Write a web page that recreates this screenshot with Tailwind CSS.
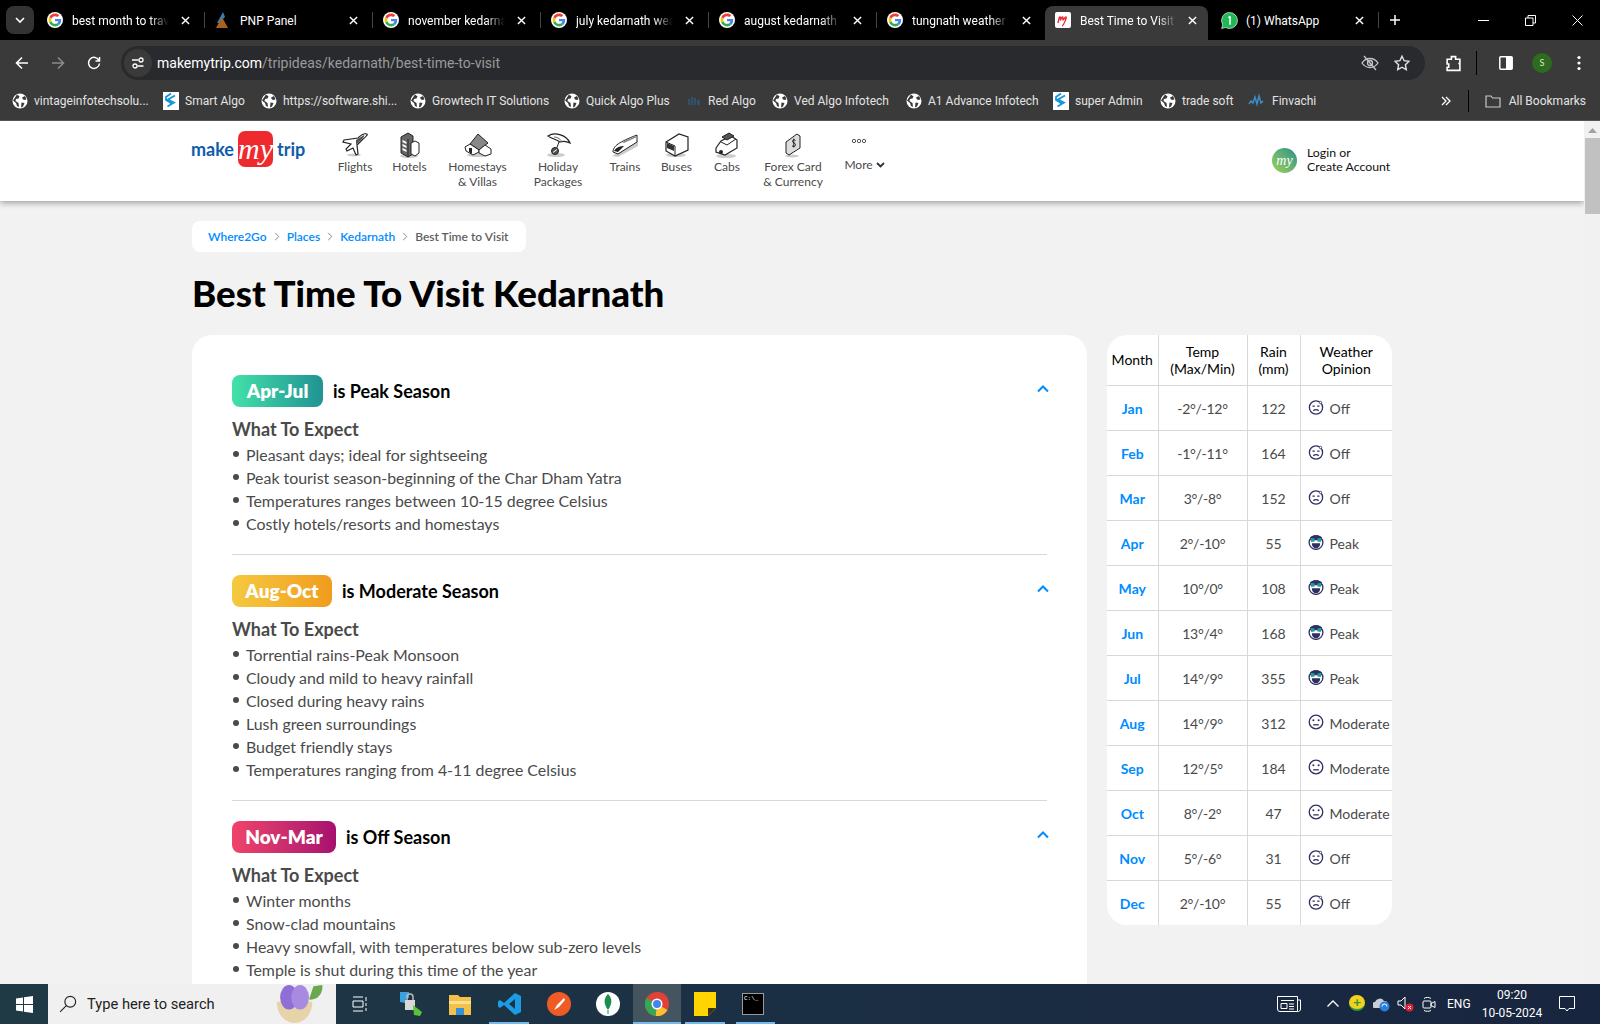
<!doctype html>
<html lang="en">
<head>
<meta charset="utf-8">
<title>Best Time To Visit Kedarnath</title>
<script src="https://cdn.jsdelivr.net/npm/@tailwindcss/browser@4"></script>
</head>
<body class="m-0 overflow-hidden">
<!-- shared icons -->
<svg class="hidden">
  <symbol id="google" viewBox="-6 -6 60 60">
    <circle cx="24" cy="24" r="30" fill="#fff"/>
    <path fill="#EA4335" d="M24 9.5c3.54 0 6.71 1.22 9.21 3.6l6.85-6.85C35.9 2.38 30.47 0 24 0 14.62 0 6.51 5.38 2.56 13.22l7.98 6.19C12.43 13.72 17.74 9.5 24 9.5z"/>
    <path fill="#4285F4" d="M46.98 24.55c0-1.57-.15-3.09-.38-4.55H24v9.02h12.94c-.58 2.96-2.26 5.48-4.78 7.18l7.73 6c4.51-4.18 7.09-10.36 7.09-17.65z"/>
    <path fill="#FBBC05" d="M10.53 28.59c-.48-1.45-.76-2.99-.76-4.59s.27-3.14.76-4.59l-7.98-6.19C.92 16.46 0 20.12 0 24c0 3.88.92 7.54 2.56 10.78l7.97-6.19z"/>
    <path fill="#34A853" d="M24 48c6.48 0 11.93-2.13 15.89-5.81l-7.73-6c-2.15 1.45-4.92 2.3-8.16 2.3-6.26 0-11.57-4.22-13.47-9.91l-7.98 6.19C6.51 42.62 14.62 48 24 48z"/>
  </symbol>
  <symbol id="x" viewBox="0 0 10 10"><path d="M1 1l8 8M9 1l-8 8" stroke="#fff" stroke-width="1.6" fill="none"/></symbol>
  <symbol id="globe" viewBox="0 0 16 16">
    <circle cx="8" cy="8" r="7.5" fill="#fff"/>
    <path d="M5 1.5l2.5 2-1 2-2.5 .5-.5 2 3 2 .5 4-2-1-1-3-3-2.500zM10 4.500l3-1.500 1.500 3-1.500 1-2-.5zM9.500 9.500l3 .5-1.500 3.500-2 1z" fill="#3a3a3a"/>
  </symbol>
  <symbol id="salgo" viewBox="0 0 16 18">
    <rect width="16" height="18" fill="#fff"/>
    <path d="M12 3.500L5 7.500l6 3-6.500 4M8 1.500L3 5v3l5 3-1 1" fill="none" stroke="#1796d8" stroke-width="1.800"/>
  </symbol>
  <symbol id="off" viewBox="0 0 16 16">
    <g fill="none" stroke="#2f2f63" stroke-width="1.300">
      <circle cx="8" cy="8.500" r="6.600"/>
      <path d="M4.500 7.200h2.300M9.200 7.200h2.300M5.300 11.800c1.500-1.700 3.900-1.700 5.400 0"/>
    </g>
    <circle cx="12.500" cy="3.500" r="1.200" fill="#fff" stroke="#2f2f63" stroke-width=".8"/>
  </symbol>
  <symbol id="peak" viewBox="0 0 16 16">
    <circle cx="8" cy="8.500" r="6.900" fill="#fff" stroke="#2f2f63" stroke-width="1.300"/>
    <path d="M2 3.200c3-2.400 9-2.400 12 0v3H2z" fill="#2f2f63"/>
    <path d="M2.500 3.800l4.200 .7v3L3.200 8zM13.500 3.800l-4.200 .7v3l3.500 .5z" fill="#1f9d9d"/>
    <path d="M3.800 9.300h8.400c0 3.200-2 5-4.200 5s-4.200-1.800-4.200-5z" fill="#2f2f63"/>
  </symbol>
  <symbol id="mod" viewBox="0 0 16 16">
    <g fill="none" stroke="#2f2f63" stroke-width="1.300">
      <circle cx="8" cy="8" r="6.800"/>
      <path d="M5.200 10.800h5.600"/>
    </g>
    <circle cx="5.400" cy="6.200" r="1" fill="#2f2f63"/><circle cx="10.600" cy="6.200" r="1" fill="#2f2f63"/>
  </symbol>
  <symbol id="chev" viewBox="0 0 12 8"><path d="M1 6.500l5-5 5 5" fill="none" stroke="#008cff" stroke-width="2"/></symbol>
  <symbol id="crumb" viewBox="0 0 6 10"><path d="M1 1l4 4-4 4" fill="none" stroke="#777" stroke-width="1"/></symbol>
</svg>

<div class="w-[1600px] h-[1024px] flex flex-col overflow-hidden font-['Lato',sans-serif] bg-[#f2f2f2]">

  <!-- tab strip -->
  <div class="h-10 shrink-0 bg-black flex text-white font-['Roboto',sans-serif] text-[12px] relative">
    <div class="w-[37px] flex pl-1.5 pt-1.5">
      <div class="w-7 h-7 rounded-lg bg-[#333] flex items-center justify-center">
        <svg width="10" height="7" viewBox="0 0 10 7"><path d="M1 1l4 4 4-4" fill="none" stroke="#fff" stroke-width="1.600"/></svg>
      </div>
    </div>
    <div class="w-[168px] flex items-center pl-[10px] pr-[14px] border-r border-[#444] my-3"><svg class="w-4 h-4 shrink-0"><use href="#google"/></svg><span class="ml-[9px] pt-[2px] w-[97px] overflow-hidden whitespace-nowrap [mask-image:linear-gradient(to_right,black_80%,transparent)]">best month to travel</span><svg class="ml-auto w-[9px] h-[9px]"><use href="#x"/></svg></div>
    <div class="w-[168px] flex items-center pl-[10px] pr-[14px] border-r border-[#444] my-3"><svg class="w-4 h-4 shrink-0" viewBox="0 0 16 16"><path d="M8 0l2 5-3 3 3 3H2z" fill="#2f7fc1"/><path d="M7 5l6 11H1z" fill="#a8611f"/></svg><span class="ml-[9px] pt-[2px] w-[97px] overflow-hidden whitespace-nowrap">PNP Panel</span><svg class="ml-auto w-[9px] h-[9px]"><use href="#x"/></svg></div>
    <div class="w-[168px] flex items-center pl-[10px] pr-[14px] border-r border-[#444] my-3"><svg class="w-4 h-4 shrink-0"><use href="#google"/></svg><span class="ml-[9px] pt-[2px] w-[97px] overflow-hidden whitespace-nowrap [mask-image:linear-gradient(to_right,black_80%,transparent)]">november kedarnath</span><svg class="ml-auto w-[9px] h-[9px]"><use href="#x"/></svg></div>
    <div class="w-[168px] flex items-center pl-[10px] pr-[14px] border-r border-[#444] my-3"><svg class="w-4 h-4 shrink-0"><use href="#google"/></svg><span class="ml-[9px] pt-[2px] w-[97px] overflow-hidden whitespace-nowrap [mask-image:linear-gradient(to_right,black_80%,transparent)]">july kedarnath weather</span><svg class="ml-auto w-[9px] h-[9px]"><use href="#x"/></svg></div>
    <div class="w-[168px] flex items-center pl-[10px] pr-[14px] border-r border-[#444] my-3"><svg class="w-4 h-4 shrink-0"><use href="#google"/></svg><span class="ml-[9px] pt-[2px] w-[97px] overflow-hidden whitespace-nowrap [mask-image:linear-gradient(to_right,black_80%,transparent)]">august kedarnath weather</span><svg class="ml-auto w-[9px] h-[9px]"><use href="#x"/></svg></div>
    <div class="w-[168px] flex items-center pl-[10px] pr-[14px] my-3"><svg class="w-4 h-4 shrink-0"><use href="#google"/></svg><span class="ml-[9px] pt-[2px] w-[97px] overflow-hidden whitespace-nowrap [mask-image:linear-gradient(to_right,black_80%,transparent)]">tungnath weather</span><svg class="ml-auto w-[9px] h-[9px]"><use href="#x"/></svg></div>
    <div class="w-[163px] mt-1.5 pb-[6px] rounded-t-lg bg-[#3a3a3a] flex items-center pl-[10px] pr-[11px] -mr-[2px]"><svg class="w-4 h-4 shrink-0" viewBox="0 0 16 16"><rect width="16" height="16" rx="2" fill="#fff"/><path d="M3 11c1-5 1-6 2-6s0 3 .5 3 1-3 2-3 0 3 .5 3 2-3 3-3-2 8-4 9" fill="none" stroke="#e8242e" stroke-width="1.300"/></svg><span class="ml-[9px] pt-[2px] w-[97px] overflow-hidden whitespace-nowrap [mask-image:linear-gradient(to_right,black_80%,transparent)]">Best Time to Visit Kedarnath</span><svg class="ml-auto w-[9px] h-[9px]"><use href="#x"/></svg></div>
    <div class="w-[168px] flex items-center pl-[10px] pr-[14px] border-r border-[#444] my-3 ml-[5px]"><svg class="w-[17px] h-[17px] shrink-0" viewBox="0 0 16 16"><path d="M8 .5a7.500 7.500 0 0 1 0 15c-1.300 0-2.500-.3-3.600-.9L.6 15.500l1-3.600A7.500 7.500 0 0 1 8 .5z" fill="#1fb855" stroke="#fff" stroke-width=".6"/><path d="M8.500 4v8M7 5.500L8.500 4" stroke="#fff" stroke-width="1.400" fill="none"/></svg><span class="ml-[8px] pt-[2px] w-[97px] overflow-hidden whitespace-nowrap">(1) WhatsApp</span><svg class="ml-auto w-[9px] h-[9px]"><use href="#x"/></svg></div>
    <svg class="ml-[10px] mt-[14px] w-[12px] h-[12px]" viewBox="0 0 12 12"><path d="M6 1v10M1 6h10" stroke="#fff" stroke-width="1.500"/></svg>
    <div class="ml-auto flex items-center gap-[36px] pr-[17px]">
      <svg class="w-[11px] h-[11px]" viewBox="0 0 11 11"><path d="M0 5.500h11" stroke="#fff"/></svg>
      <svg class="w-[11px] h-[11px]" viewBox="0 0 11 11"><path d="M.5 3h7.500v7.500H.5zM3 3V.5h7.500V8H8" fill="none" stroke="#fff"/></svg>
      <svg class="w-[11px] h-[11px]" viewBox="0 0 11 11"><path d="M.5.500l10 10M10.500.500l-10 10" stroke="#fff"/></svg>
    </div>
  </div>

  <!-- address bar -->
  <div class="h-10 shrink-0 bg-[#3a3a3a] flex items-center pt-[6px] relative">
    <svg class="ml-[15px] w-[14px] h-[14px]" viewBox="0 0 14 14"><path d="M13 7H2M7 1.500L1.500 7 7 12.500" fill="none" stroke="#fff" stroke-width="1.600"/></svg>
    <svg class="ml-[22px] w-[14px] h-[14px]" viewBox="0 0 14 14"><path d="M1 7h11M7 1.500L12.500 7 7 12.500" fill="none" stroke="#8a8a8a" stroke-width="1.600"/></svg>
    <svg class="ml-[22px] w-[14px] h-[14px]" viewBox="0 0 14 14"><path d="M12 4.500A5.500 5.500 0 1 0 12.500 7.500M12.500 1v4h-4" fill="none" stroke="#fff" stroke-width="1.500"/></svg>
    <div class="ml-[20px] w-[1304px] h-[34px] rounded-full bg-[#282a2d] flex items-center">
      <div class="ml-[3px] w-7 h-7 rounded-full bg-[#3a3a3a] flex items-center justify-center">
        <svg class="w-[14px] h-[14px]" viewBox="0 0 14 14"><g fill="none" stroke="#fff" stroke-width="1.300"><path d="M1 4h6.500M12.500 10H6.500"/><circle cx="10" cy="4" r="2"/><circle cx="4" cy="10" r="2"/></g></svg>
      </div>
      <span class="ml-[5px] font-['Roboto',sans-serif] text-[14px] text-white">makemytrip.com<span class="text-[#9a9a9a]">/tripideas/kedarnath/best-time-to-visit</span></span>
      <svg class="ml-auto w-[18px] h-[16px]" viewBox="0 0 18 16"><g fill="none" stroke="#c7c7c7" stroke-width="1.300"><path d="M1 8c4-6 12-6 16 0-4 6-12 6-16 0z"/><circle cx="9" cy="8" r="2.500"/><path d="M3 1l12 14"/></g></svg>
      <svg class="ml-[15px] mr-[15px] w-[16px] h-[16px]" viewBox="0 0 16 16"><path d="M8 1.200l2.100 4.500 4.900.6-3.600 3.400.9 4.900L8 12.200l-4.300 2.400.9-4.900L1 6.300l4.900-.6z" fill="none" stroke="#e3e3e3" stroke-width="1.400"/></svg>
    </div>
    <svg class="ml-[20px] w-[17px] h-[17px]" viewBox="0 0 16 16"><path d="M2 4h4V1.500h4V4h4v4h-1.500v0H14v6.500H2v-3h1.500v-3H2z" fill="none" stroke="#fff" stroke-width="1.500"/></svg>
    <div class="ml-[14px] w-px h-6 bg-black"></div>
    <svg class="ml-[22px] w-[14px] h-[14px]" viewBox="0 0 14 14"><rect x=".8" y=".8" width="12.400" height="12.400" rx="1" fill="none" stroke="#fff" stroke-width="1.500"/><rect x="7" y="1" width="6" height="12" fill="#fff"/></svg>
    <div class="ml-[19px] w-5 h-5 rounded-full bg-[#2e6b1f] text-[#d8e8d0] text-[9px] flex items-center justify-center">S</div>
    <svg class="ml-[25px] w-1 h-4" viewBox="0 0 4 16"><circle cx="2" cy="2.500" r="1.600" fill="#fff"/><circle cx="2" cy="8" r="1.600" fill="#fff"/><circle cx="2" cy="13.500" r="1.600" fill="#fff"/></svg>
  </div>

  <!-- bookmarks -->
  <div class="h-10 shrink-0 bg-[#3a3a3a] flex items-center pl-3 pt-[1px] text-[#e3e3e3] font-['Roboto',sans-serif] text-[12px] whitespace-nowrap">
    <div class="w-[151px] flex items-center gap-1.5"><svg class="w-4 h-4"><use href="#globe"/></svg>vintageinfotechsolu...</div>
    <div class="w-[98px] flex items-center gap-1.5"><svg class="w-4 h-[18px]"><use href="#salgo"/></svg>Smart Algo</div>
    <div class="w-[149px] flex items-center gap-1.5"><svg class="w-4 h-4"><use href="#globe"/></svg>https://software.shi...</div>
    <div class="w-[154px] flex items-center gap-1.5"><svg class="w-4 h-4"><use href="#globe"/></svg>Growtech IT Solutions</div>
    <div class="w-[122px] flex items-center gap-1.5"><svg class="w-4 h-4"><use href="#globe"/></svg>Quick Algo Plus</div>
    <div class="w-[86px] flex items-center gap-1.5"><svg class="w-4 h-4" viewBox="0 0 16 16"><path d="M2 6h2v6H2zM5 4h2v8H5zM8 5h2v7H8zM11 7h3v5h-3z" fill="#34506a"/></svg>Red Algo</div>
    <div class="w-[134px] flex items-center gap-1.5"><svg class="w-4 h-4"><use href="#globe"/></svg>Ved Algo Infotech</div>
    <div class="w-[147px] flex items-center gap-1.5"><svg class="w-4 h-4"><use href="#globe"/></svg>A1 Advance Infotech</div>
    <div class="w-[107px] flex items-center gap-1.5"><svg class="w-4 h-[18px]"><use href="#salgo"/></svg>super Admin</div>
    <div class="w-[88px] flex items-center gap-1.5"><svg class="w-4 h-4"><use href="#globe"/></svg>trade soft</div>
    <div class="flex items-center gap-2"><svg class="w-4 h-4" viewBox="0 0 16 16"><path d="M1 11l2-3 2 2 2-6 2 7 2-8 2 7 2-2" fill="none" stroke="#3d8bc7" stroke-width="1.500"/></svg>Finvachi</div>
    <svg class="ml-auto w-[10px] h-[10px]" viewBox="0 0 10 10"><path d="M1 1l4 4-4 4M5 1l4 4-4 4" fill="none" stroke="#fff" stroke-width="1.300"/></svg>
    <div class="ml-[17px] w-px h-[22px] bg-black"></div>
    <svg class="ml-[16px] w-4 h-4" viewBox="0 0 16 16"><path d="M1 3h5l1.500 2H15v9H1z" fill="none" stroke="#c7c7c7" stroke-width="1.200"/></svg>
    <span class="ml-[8px] mr-[14px]">All Bookmarks</span>
  </div>

  <!-- browser viewport -->
  <div class="flex-1 flex min-h-0 border-t border-[#555]">
    <div class="flex-1 min-w-0 overflow-hidden">
      <!-- site header -->
      <header class="h-20 bg-white shadow-[0_2px_6px_rgba(0,0,0,0.35)] flex relative pl-[191px] text-[12px] leading-[15px] text-[#4a4a4a]">
        <div class="w-[137px] flex items-start pt-[10px]">
          <span class="font-bold text-[18px] leading-[36px] text-[#0f5cab]">make</span>
          <div class="mx-1 w-[35px] h-[36px] shrink-0 rounded-[7px] bg-[#ee2a2f] flex items-center justify-center font-['Liberation_Serif',serif] italic text-white text-[30px] leading-none">my</div>
          <span class="font-bold text-[18px] leading-[36px] text-[#0f5cab]">trip</span>
        </div>
        <nav class="flex text-center">
          <div class="w-[54px] flex flex-col items-center pt-[10px]">
            <svg class="w-[28px] h-[28px]" viewBox="0 0 28 28"><ellipse cx="13" cy="24" rx="7" ry="1.500" fill="#ccc"/><path d="M26 3c-3-1-6 1-9 4L3 9l-1 2 8 2-5 5 1 2 6-3 3 7 2-1-1-9 6-6c3-2 5-5 4-5z" fill="#fff" stroke="#222" stroke-width="1.200"/><path d="M15 9l8-5c1 1-1 3-3 5l-5 5z" fill="#555"/></svg>
            <span>Flights</span>
          </div>
          <div class="w-[55px] flex flex-col items-center pt-[10px]">
            <svg class="w-[28px] h-[28px]" viewBox="0 0 28 28"><ellipse cx="13" cy="25" rx="9" ry="2" fill="#ccc"/><path d="M5 6l7-4 5 3v18l-5 3-7-4z" fill="#666" stroke="#222"/><path d="M12 8v18" stroke="#222"/><path d="M6.500 9l4 2v2l-4-2zM6.500 13l4 2v2l-4-2zM6.500 17l4 2v2l-4-2z" fill="#fff"/><path d="M15 12l4-2 4 2v10l-4 3-4-2z" fill="#fff" stroke="#222"/></svg>
            <span>Hotels</span>
          </div>
          <div class="w-[81px] flex flex-col items-center pt-[10px]">
            <svg class="w-[30px] h-[28px]" viewBox="0 0 30 28"><ellipse cx="15" cy="24" rx="11" ry="2" fill="#ccc"/><path d="M7 13L15 3l10 9-9 7z" fill="#888" stroke="#222"/><path d="M7 13l-5 3 1 4 7 4 6-3v-2z" fill="#fff" stroke="#222"/><path d="M16 19l6-5 6 4v5l-6 2-6-3z" fill="#fff" stroke="#222"/><path d="M6 17h3v6l-3-2z" fill="#222"/></svg>
            <span>Homestays<br>&amp; Villas</span>
          </div>
          <div class="w-[80px] flex flex-col items-center pt-[10px]">
            <svg class="w-[28px] h-[28px]" viewBox="0 0 28 28"><ellipse cx="12" cy="24" rx="9" ry="2" fill="#ccc"/><path d="M4 5c6-4 18-2 22 7-4-2-7-2-10-1-4-3-8-3-12-6z" fill="#fff" stroke="#222" stroke-width="1.200"/><path d="M10 6c2 0 6 1 8 5" stroke="#666" fill="none"/><path d="M15 11l-3 8" stroke="#222"/><circle cx="11" cy="20" r="3.500" fill="#555" stroke="#222"/><path d="M9 21.500l4-3" stroke="#fff"/></svg>
            <span>Holiday<br>Packages</span>
          </div>
          <div class="w-[54px] flex flex-col items-center pt-[10px]">
            <svg class="w-[30px] h-[28px]" viewBox="0 0 30 28"><path d="M2 25l6 1 20-11V9z" fill="#ccc"/><path d="M3 21c0-6 6-10 24-17v7L8 23z" fill="#fff" stroke="#222"/><path d="M4 20c2-4 7-5 10-5l-6 6z" fill="#222"/><path d="M12 11l14-6v1.500L14 12z" fill="#888"/></svg>
            <span>Trains</span>
          </div>
          <div class="w-[49px] flex flex-col items-center pt-[10px]">
            <svg class="w-[28px] h-[28px]" viewBox="0 0 28 28"><ellipse cx="13" cy="24" rx="10" ry="2" fill="#ccc"/><path d="M3 11L16 3l9 3v13L12 25 3 20z" fill="#fff" stroke="#222" stroke-width="1.200"/><path d="M3 11l9 4v10" fill="none" stroke="#222"/><path d="M4 12l7 3v5l-7-3z" fill="#333"/></svg>
            <span>Buses</span>
          </div>
          <div class="w-[52px] flex flex-col items-center pt-[10px]">
            <svg class="w-[28px] h-[28px]" viewBox="0 0 28 28"><ellipse cx="13" cy="25" rx="10" ry="2" fill="#ccc"/><path d="M3 17l5-7 10-5 6 4v8l-12 7-9-3z" fill="#fff" stroke="#222" stroke-width="1.200"/><path d="M9 6l7-4 5 3-7 4z" fill="#555" stroke="#222"/><path d="M8 11l6 3 9-6" fill="none" stroke="#222"/><circle cx="8" cy="21" r="2" fill="#222"/></svg>
            <span>Cabs</span>
          </div>
          <div class="w-[80px] flex flex-col items-center pt-[10px]">
            <svg class="w-[24px] h-[28px]" viewBox="0 0 24 28"><ellipse cx="11" cy="25" rx="7" ry="1.500" fill="#ccc"/><path d="M5 11l11-8 3 2v12l-11 7-3-2z" fill="#ddd" stroke="#222"/><path d="M14.500 9.500c-1-1.500-3.500-.5-3 1.200s3 1 3 3-2.500 2.500-3.500 1M12.800 7.500v9" fill="none" stroke="#222"/></svg>
            <span>Forex Card<br>&amp; Currency</span>
          </div>
          <div class="w-[52px] flex flex-col items-center pt-[10px]">
            <svg class="w-[28px] h-[28px]" viewBox="0 0 28 28"><g fill="none" stroke="#555"><circle cx="9" cy="10" r="1.700"/><circle cx="14" cy="10" r="1.700"/><circle cx="19" cy="10" r="1.700"/></g></svg>
            <span class="-mt-[2px] ml-[11px] flex items-center gap-[3px]">More<svg class="w-[9px] h-[6px]" viewBox="0 0 9 6"><path d="M1 1l3.500 3.500L8 1" fill="none" stroke="#333" stroke-width="1.800"/></svg></span>
          </div>
        </nav>
        <div class="ml-[387px] flex items-center gap-[10px] h-[78px] text-[#111] text-[12.300px]">
          <div class="w-[25px] h-[25px] rounded-full bg-gradient-to-tr from-[#9ed44c] to-[#249086] flex items-center justify-center font-['Liberation_Serif',serif] italic text-white text-[14px]">my</div>
          <div class="leading-[14px]">Login or<br>Create Account</div>
        </div>
      </header>

      <main class="pl-[192px] w-[1392px]">
        <!-- breadcrumb -->
        <div class="mt-5 w-[334px] h-[31px] rounded-lg bg-white flex items-center pl-4 text-[12px] font-semibold text-[#008cff] whitespace-nowrap">
          <span>Where2Go</span>
          <svg class="mx-[7px] w-[6px] h-[9px]"><use href="#crumb"/></svg>
          <span>Places</span>
          <svg class="mx-[7px] w-[6px] h-[9px]"><use href="#crumb"/></svg>
          <span>Kedarnath</span>
          <svg class="mx-[7px] w-[6px] h-[9px]"><use href="#crumb"/></svg>
          <span class="text-[#5f5f5f]">Best Time to Visit</span>
        </div>
        <h1 class="mt-[17px] h-[48px] text-[36.700px] leading-[48px] font-black text-black">Best Time To Visit Kedarnath</h1>

        <div class="mt-[18px] flex gap-5 items-start">
          <!-- seasons -->
          <div class="w-[895px] rounded-[20px] bg-white px-10 pt-10 pb-10 shrink-0 text-[#4a4a4a]">
            <section class="pb-[19px] border-b border-[#d8d8d8] mb-5">
              <div class="h-8 flex items-center">
                <span class="w-[91px] h-8 rounded-lg bg-gradient-to-r from-[#43e1a8] to-[#219393] text-white font-extrabold text-[19px] leading-8 text-center">Apr-Jul</span>
                <span class="ml-[10px] text-[18px] font-bold text-black">is Peak Season</span>
                <svg class="ml-auto mr-[-2px] w-3 h-2 -mt-[4px]"><use href="#chev"/></svg>
              </div>
              <h3 class="mt-[9px] h-[26px] text-[18px] leading-[26px] font-bold">What To Expect</h3>
              <ul class="mt-[1px] text-[15.900px] leading-[23px] pl-[14px] [&>li]:relative [&>li]:before:absolute [&>li]:before:content-[''] [&>li]:before:left-[-13px] [&>li]:before:top-[8px] [&>li]:before:w-[6px] [&>li]:before:h-[6px] [&>li]:before:rounded-full [&>li]:before:bg-[#4a4a4a]">
                <li>Pleasant days; ideal for sightseeing</li>
                <li>Peak tourist season-beginning of the Char Dham Yatra</li>
                <li>Temperatures ranges between 10-15 degree Celsius</li>
                <li>Costly hotels/resorts and homestays</li>
              </ul>
            </section>
            <section class="pb-[19px] border-b border-[#d8d8d8] mb-5">
              <div class="h-8 flex items-center">
                <span class="w-[100px] h-8 rounded-lg bg-gradient-to-r from-[#f5c93f] to-[#f09c1d] text-white font-extrabold text-[19px] leading-8 text-center">Aug-Oct</span>
                <span class="ml-[10px] text-[18px] font-bold text-black">is Moderate Season</span>
                <svg class="ml-auto mr-[-2px] w-3 h-2 -mt-[4px]"><use href="#chev"/></svg>
              </div>
              <h3 class="mt-[9px] h-[26px] text-[18px] leading-[26px] font-bold">What To Expect</h3>
              <ul class="mt-[1px] text-[15.900px] leading-[23px] pl-[14px] [&>li]:relative [&>li]:before:absolute [&>li]:before:content-[''] [&>li]:before:left-[-13px] [&>li]:before:top-[8px] [&>li]:before:w-[6px] [&>li]:before:h-[6px] [&>li]:before:rounded-full [&>li]:before:bg-[#4a4a4a]">
                <li>Torrential rains-Peak Monsoon</li>
                <li>Cloudy and mild to heavy rainfall</li>
                <li>Closed during heavy rains</li>
                <li>Lush green surroundings</li>
                <li>Budget friendly stays</li>
                <li>Temperatures ranging from 4-11 degree Celsius</li>
              </ul>
            </section>
            <section>
              <div class="h-8 flex items-center">
                <span class="w-[104px] h-8 rounded-lg bg-gradient-to-r from-[#f0436a] to-[#a70f6e] text-white font-extrabold text-[19px] leading-8 text-center">Nov-Mar</span>
                <span class="ml-[10px] text-[18px] font-bold text-black">is Off Season</span>
                <svg class="ml-auto mr-[-2px] w-3 h-2 -mt-[4px]"><use href="#chev"/></svg>
              </div>
              <h3 class="mt-[9px] h-[26px] text-[18px] leading-[26px] font-bold">What To Expect</h3>
              <ul class="mt-[1px] text-[15.900px] leading-[23px] pl-[14px] [&>li]:relative [&>li]:before:absolute [&>li]:before:content-[''] [&>li]:before:left-[-13px] [&>li]:before:top-[8px] [&>li]:before:w-[6px] [&>li]:before:h-[6px] [&>li]:before:rounded-full [&>li]:before:bg-[#4a4a4a]">
                <li>Winter months</li>
                <li>Snow-clad mountains</li>
                <li>Heavy snowfall, with temperatures below sub-zero levels</li>
                <li>Temple is shut during this time of the year</li>
              </ul>
            </section>
          </div>

          <!-- monthly table -->
          <div class="w-[285px] rounded-[20px] bg-white overflow-hidden shrink-0">
            <table class="w-[285px] table-fixed border-collapse text-[14px] text-center text-[#4a4a4a]">
              <colgroup><col class="w-[51px]"><col class="w-[89px]"><col class="w-[53px]"><col class="w-[92px]"></colgroup>
              <thead class="text-black font-normal leading-[17px]">
                <tr class="h-[50px] border-b border-[#d8d8d8]">
                  <th class="font-normal border-r border-[#d8d8d8]">Month</th>
                  <th class="font-normal border-r border-[#d8d8d8]">Temp<br>(Max/Min)</th>
                  <th class="font-normal border-r border-[#d8d8d8]">Rain<br>(mm)</th>
                  <th class="font-normal">Weather<br>Opinion</th>
                </tr>
              </thead>
              <tbody class="[&>tr>td]:pt-[2px] [&>tr>td:nth-child(2)]:tracking-[-0.3px]">
                <tr class="h-[45px] border-b border-[#d8d8d8]"><td class="font-bold text-[#008cff] border-r border-[#d8d8d8]">Jan</td><td class="border-r border-[#d8d8d8]">-2°/-12°</td><td class="border-r border-[#d8d8d8]">122</td><td class="text-left pl-[7px]"><div class="flex items-center gap-[6px]"><svg class="w-4 h-4 -mt-[3px]"><use href="#off"/></svg>Off</div></td></tr>
                <tr class="h-[45px] border-b border-[#d8d8d8]"><td class="font-bold text-[#008cff] border-r border-[#d8d8d8]">Feb</td><td class="border-r border-[#d8d8d8]">-1°/-11°</td><td class="border-r border-[#d8d8d8]">164</td><td class="text-left pl-[7px]"><div class="flex items-center gap-[6px]"><svg class="w-4 h-4 -mt-[3px]"><use href="#off"/></svg>Off</div></td></tr>
                <tr class="h-[45px] border-b border-[#d8d8d8]"><td class="font-bold text-[#008cff] border-r border-[#d8d8d8]">Mar</td><td class="border-r border-[#d8d8d8]">3°/-8°</td><td class="border-r border-[#d8d8d8]">152</td><td class="text-left pl-[7px]"><div class="flex items-center gap-[6px]"><svg class="w-4 h-4 -mt-[3px]"><use href="#off"/></svg>Off</div></td></tr>
                <tr class="h-[45px] border-b border-[#d8d8d8]"><td class="font-bold text-[#008cff] border-r border-[#d8d8d8]">Apr</td><td class="border-r border-[#d8d8d8]">2°/-10°</td><td class="border-r border-[#d8d8d8]">55</td><td class="text-left pl-[7px]"><div class="flex items-center gap-[6px]"><svg class="w-4 h-4 -mt-[3px]"><use href="#peak"/></svg>Peak</div></td></tr>
                <tr class="h-[45px] border-b border-[#d8d8d8]"><td class="font-bold text-[#008cff] border-r border-[#d8d8d8]">May</td><td class="border-r border-[#d8d8d8]">10°/0°</td><td class="border-r border-[#d8d8d8]">108</td><td class="text-left pl-[7px]"><div class="flex items-center gap-[6px]"><svg class="w-4 h-4 -mt-[3px]"><use href="#peak"/></svg>Peak</div></td></tr>
                <tr class="h-[45px] border-b border-[#d8d8d8]"><td class="font-bold text-[#008cff] border-r border-[#d8d8d8]">Jun</td><td class="border-r border-[#d8d8d8]">13°/4°</td><td class="border-r border-[#d8d8d8]">168</td><td class="text-left pl-[7px]"><div class="flex items-center gap-[6px]"><svg class="w-4 h-4 -mt-[3px]"><use href="#peak"/></svg>Peak</div></td></tr>
                <tr class="h-[45px] border-b border-[#d8d8d8]"><td class="font-bold text-[#008cff] border-r border-[#d8d8d8]">Jul</td><td class="border-r border-[#d8d8d8]">14°/9°</td><td class="border-r border-[#d8d8d8]">355</td><td class="text-left pl-[7px]"><div class="flex items-center gap-[6px]"><svg class="w-4 h-4 -mt-[3px]"><use href="#peak"/></svg>Peak</div></td></tr>
                <tr class="h-[45px] border-b border-[#d8d8d8]"><td class="font-bold text-[#008cff] border-r border-[#d8d8d8]">Aug</td><td class="border-r border-[#d8d8d8]">14°/9°</td><td class="border-r border-[#d8d8d8]">312</td><td class="text-left pl-[7px]"><div class="flex items-center gap-[6px]"><svg class="w-4 h-4 -mt-[3px]"><use href="#mod"/></svg>Moderate</div></td></tr>
                <tr class="h-[45px] border-b border-[#d8d8d8]"><td class="font-bold text-[#008cff] border-r border-[#d8d8d8]">Sep</td><td class="border-r border-[#d8d8d8]">12°/5°</td><td class="border-r border-[#d8d8d8]">184</td><td class="text-left pl-[7px]"><div class="flex items-center gap-[6px]"><svg class="w-4 h-4 -mt-[3px]"><use href="#mod"/></svg>Moderate</div></td></tr>
                <tr class="h-[45px] border-b border-[#d8d8d8]"><td class="font-bold text-[#008cff] border-r border-[#d8d8d8]">Oct</td><td class="border-r border-[#d8d8d8]">8°/-2°</td><td class="border-r border-[#d8d8d8]">47</td><td class="text-left pl-[7px]"><div class="flex items-center gap-[6px]"><svg class="w-4 h-4 -mt-[3px]"><use href="#mod"/></svg>Moderate</div></td></tr>
                <tr class="h-[45px] border-b border-[#d8d8d8]"><td class="font-bold text-[#008cff] border-r border-[#d8d8d8]">Nov</td><td class="border-r border-[#d8d8d8]">5°/-6°</td><td class="border-r border-[#d8d8d8]">31</td><td class="text-left pl-[7px]"><div class="flex items-center gap-[6px]"><svg class="w-4 h-4 -mt-[3px]"><use href="#off"/></svg>Off</div></td></tr>
                <tr class="h-[45px]"><td class="font-bold text-[#008cff] border-r border-[#d8d8d8]">Dec</td><td class="border-r border-[#d8d8d8]">2°/-10°</td><td class="border-r border-[#d8d8d8]">55</td><td class="text-left pl-[7px]"><div class="flex items-center gap-[6px]"><svg class="w-4 h-4 -mt-[3px]"><use href="#off"/></svg>Off</div></td></tr>
              </tbody>
            </table>
          </div>
        </div>
      </main>
    </div>
    <!-- scrollbar -->
    <div class="w-4 shrink-0 bg-[#f1f1f1] flex flex-col items-center pt-[7px] pl-px">
      <svg class="w-[9px] h-[5px]" viewBox="0 0 9 5"><path d="M4.500 0L9 5H0z" fill="#a3a3a3"/></svg>
      <div class="mt-[5px] w-[15px] h-[76px] bg-[#c1c1c1]"></div>
    </div>
  </div>

  <!-- taskbar -->
  <div class="h-10 shrink-0 bg-gradient-to-r from-[#1f3a45] via-[#1b2f44] to-[#18253f] flex items-center text-white relative z-10">
    <div class="w-[48px] flex justify-center">
      <svg class="w-[17px] h-[17px]" viewBox="0 0 17 17"><path d="M0 2.400L7 1.400V8H0zM8 1.200L17 0v8H8zM0 9h7v6.600L0 14.600zM8 9h9v8L8 15.800z" fill="#fff"/></svg>
    </div>
    <div class="w-[288px] h-10 bg-[#f0f0f0] flex items-center text-[#222] text-[14.700px] font-['Roboto',sans-serif]">
      <svg class="ml-[11px] w-[18px] h-[18px]" viewBox="0 0 16 16"><g fill="none" stroke="#222" stroke-width="1"><circle cx="10" cy="6" r="4.800"/><path d="M6.500 9.500L1 15"/></g></svg>
      <span class="ml-[10px] pt-[1px]">Type here to search</span>
      <svg class="ml-auto mr-[9px] w-[56px] h-[40px]" viewBox="0 0 50 36"><path d="M5 16h32c0 12-8 19-16 19S5 28 5 16z" fill="#e6d3a8"/><ellipse cx="16" cy="12" rx="8" ry="11" fill="#8f6fd6"/><ellipse cx="26" cy="12" rx="8" ry="11" fill="#a88be0"/><path d="M34 14l4-12 8-1c1 8-5 14-12 13z" fill="#6aa84f"/></svg>
    </div>
    <svg class="ml-[16px] w-4 h-4" viewBox="0 0 16 16"><g fill="none" stroke="#fff"><path d="M1 1h10M1 15h10M1 5h10v6H1zM14 1v4M14 7v3M14 12v3"/></g></svg>
    <svg class="ml-[31px] w-[24px] h-[26px]" viewBox="0 0 24 26"><path d="M1 1h9v6l-3 1-1 4-5-1z" fill="#3aa0e0"/><rect x="6" y="9" width="10" height="10" fill="#d8d8d8"/><path d="M8 9V6a3 3 0 0 1 6 0v3" fill="none" stroke="#bbb" stroke-width="1.500"/><path d="M14 14l9 7-2 4-6-1z" fill="#5cc23a"/></svg>
    <svg class="ml-[25px] w-[24px] h-[24px]" viewBox="0 0 24 24"><path d="M1 3h9l2 2h11v18H1z" fill="#f3c04a"/><path d="M1 9h22v3H1z" fill="#fbe08c"/><path d="M8 23v-7h8v7" fill="#3a90d8"/></svg>
    <svg class="ml-[26px] w-[24px] h-[24px]" viewBox="0 0 24 24"><path d="M17 1l6 3v16l-6 3L6 13l-4 3-2-1.500V9.500L2 8l4 3zM17 7l-6 5 6 5z" fill="#1d9ce5"/></svg>
    <div class="ml-[25px] w-6 h-6 rounded-full bg-[#ef5b25] flex items-center justify-center"><svg class="w-4 h-4" viewBox="0 0 16 16"><path d="M13 2L6 9l-3 5 5-3 6-7z" fill="#fff"/></svg></div>
    <div class="ml-[25px] w-6 h-6 rounded-full bg-white flex items-center justify-center"><svg class="w-3 h-5" viewBox="0 0 12 20"><path d="M6 0c4 4 5 9 0 16C1 9 2 4 6 0zM5.500 16h1v4h-1z" fill="#1a8f4d"/></svg></div>
    <div class="ml-[13px] w-[48px] h-10 bg-[#45555f] flex items-center justify-center relative">
      <svg class="w-6 h-6" viewBox="0 0 48 48"><circle cx="24" cy="24" r="24" fill="#e04335"/><path d="M24 24L45 36A24 24 0 0 1 21 48z" fill="#fbc02d"/><path d="M24 24L3 36A24 24 0 0 1 3 12z" fill="#34a853"/><path d="M24 24L24 0A24 24 0 0 1 45 12z" fill="#e04335"/><path d="M21 48A24 24 0 0 1 3 36L24 24z" fill="#34a853"/><circle cx="24" cy="24" r="11" fill="#fff"/><circle cx="24" cy="24" r="8" fill="#4285f4"/></svg>
      <div class="absolute bottom-0 left-0 right-0 h-[2px] bg-[#76b9ed]"></div>
    </div>
    <svg class="ml-[13px] w-[22px] h-[24px]" viewBox="0 0 22 24"><path d="M0 0h22v16l-8 8H0z" fill="#ffd400"/><path d="M22 16l-8 8v-8z" fill="#3b3210"/></svg>
    <div class="ml-[26px] w-[22px] h-[22px] bg-black border border-[#9a9a9a] text-[6px] leading-[10px] pl-px font-['Liberation_Mono',monospace] overflow-hidden">C:\_</div>
    <!-- running app markers -->
    <div class="absolute bottom-0 left-[489px] w-[40px] h-[2px] bg-[#76b9ed]"></div>
    <div class="absolute bottom-0 left-[685px] w-[40px] h-[2px] bg-[#76b9ed]"></div>
    <div class="absolute bottom-0 left-[736px] w-[39px] h-[2px] bg-[#76b9ed]"></div>

    <!-- system tray -->
    <svg class="absolute left-[1277px] top-[12px] w-[24px] h-[16px]" viewBox="0 0 24 16"><g fill="none" stroke="#fff"><path d="M.5.500h20v15H3a2.500 2.500 0 0 1-2.500-2.500zM20.500 4h3v9a2.500 2.500 0 0 1-3 2.500"/><path d="M4 4.500h13M4 7.500h6v5H4zM12 8h5M12 10.500h5M12 13h5"/></g></svg>
    <svg class="absolute left-[1327px] top-[16px] w-[12px] h-[7px]" viewBox="0 0 12 7"><path d="M.5 6.500L6 1l5.500 5.500" fill="none" stroke="#fff" stroke-width="1.300"/></svg>
    <div class="absolute left-[1349px] top-[11px] w-4 h-4 rounded-full bg-[#f2d21f] border-b-2 border-[#2e9a3a] flex items-center justify-center text-[#2e9a3a] font-bold text-[14px] leading-none">+</div>
    <svg class="absolute left-[1373px] top-[12px] w-[17px] h-[16px]" viewBox="0 0 17 16"><path d="M2 12a3 3 0 0 1 0-6 5 5 0 0 1 9-1 4 4 0 0 1 3 7z" fill="#c9ced6"/><circle cx="11.500" cy="10.500" r="5" fill="#2a7fdc"/><path d="M9 10.500a2.500 2.500 0 0 1 5 0" fill="none" stroke="#fff"/></svg>
    <svg class="absolute left-[1397px] top-[12px] w-[17px] h-[16px]" viewBox="0 0 17 16"><path d="M1 5h3l4-4v12L4 9H1z" fill="none" stroke="#fff"/><circle cx="12.500" cy="11.500" r="4" fill="#e02030"/><path d="M11 10l3 3M14 10l-3 3" stroke="#fff"/></svg>
    <svg class="absolute left-[1421px] top-[12px] w-4 h-4" viewBox="0 0 16 16"><g fill="none" stroke="#fff"><rect x="2" y="5" width="8" height="7" rx="1"/><path d="M10 7.500l4-2v6l-4-2zM3 2.500c2-1.500 5-1.500 7 0M3 14.500c2 1 5 1 7 0"/></g></svg>
    <div class="absolute left-[1447px] top-[11px] text-[12px] leading-[18px] font-['Roboto',sans-serif]">ENG</div>
    <div class="absolute left-[1474px] w-[76px] top-[2px] text-center text-[12px] leading-[18px] font-['Roboto',sans-serif]">09:20<br>10-05-2024</div>
    <svg class="absolute left-[1559px] top-[12px] w-4 h-4" viewBox="0 0 16 16"><path d="M.5.500h15v12H10l-2 2.500-2-2.500H.5z" fill="none" stroke="#fff"/></svg>
  </div>
</div>
</body>
</html>
